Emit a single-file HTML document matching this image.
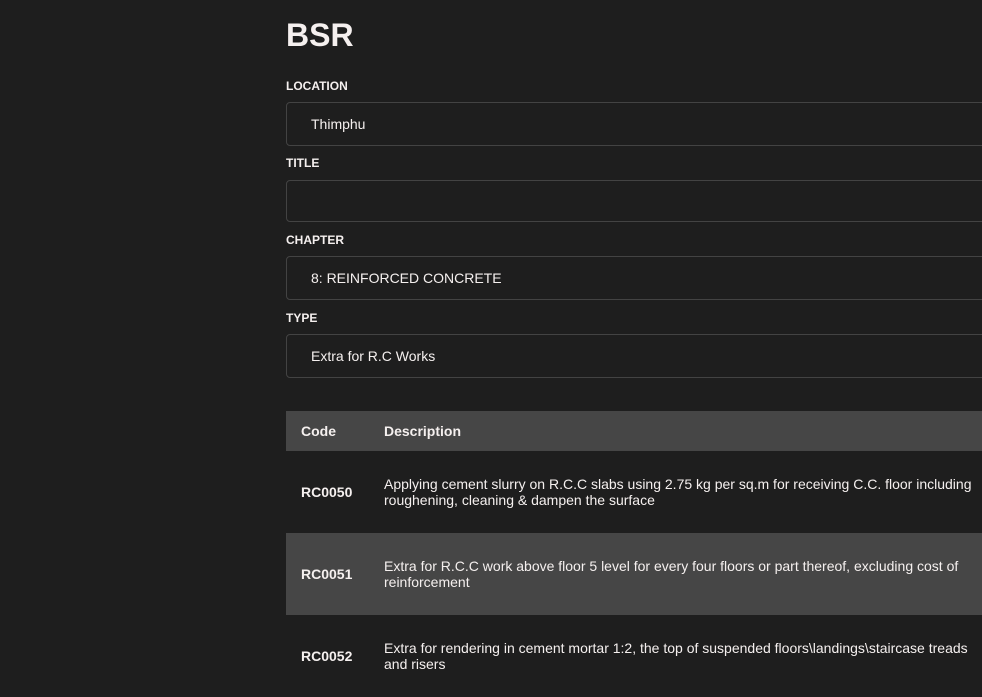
<!DOCTYPE html>
<html><head><meta charset="utf-8"><style>
html,body{margin:0;padding:0;background:#1e1e1e;width:982px;height:680px;overflow:hidden;font-family:"Liberation Sans",Arial,sans-serif;color:#f5f0ef}
.wrap{position:absolute;left:286px;top:0;width:760px}
h1{position:absolute;top:15px;left:0;margin:0;font-size:32px;font-weight:bold;line-height:40px}
.lab{position:absolute;left:0;font-size:12px;font-weight:bold;line-height:14px}
.inp{position:absolute;left:0;width:760px;box-sizing:border-box;border:1px solid #434343;border-radius:4px;font-size:14px;padding-left:24px;display:flex;align-items:center}
table{position:absolute;left:0;top:411px;width:760px;border-collapse:collapse;font-size:14px}
th{background:#464646;height:40px;text-align:left;font-weight:bold;padding:0;font-size:14px}
td{height:82px;padding:0;line-height:16px;vertical-align:middle}
td.c{font-weight:bold;padding-left:15px;width:83px}
th.c{padding-left:15px;width:83px}
tr.g td{background:#464646}
</style></head><body><div class="wrap">
<h1>BSR</h1>
<div class="lab" style="top:79px">LOCATION</div>
<div class="inp" style="top:102px;height:44px">Thimphu</div>
<div class="lab" style="top:156px">TITLE</div>
<div class="inp" style="top:180px;height:42px"></div>
<div class="lab" style="top:233px">CHAPTER</div>
<div class="inp" style="top:256px;height:44px">8: REINFORCED CONCRETE</div>
<div class="lab" style="top:311px">TYPE</div>
<div class="inp" style="top:334px;height:44px">Extra for R.C Works</div>
<table>
<tr><th class="c">Code</th><th>Description</th></tr>
<tr><td class="c">RC0050</td><td>Applying cement slurry on R.C.C slabs using 2.75 kg per sq.m for receiving C.C. floor including<br>roughening, cleaning &amp; dampen the surface</td></tr>
<tr class="g"><td class="c">RC0051</td><td>Extra for R.C.C work above floor 5 level for every four floors or part thereof, excluding cost of<br>reinforcement</td></tr>
<tr><td class="c">RC0052</td><td>Extra for rendering in cement mortar 1:2, the top of suspended floors\landings\staircase treads<br>and risers</td></tr>
</table>
</div></body></html>
